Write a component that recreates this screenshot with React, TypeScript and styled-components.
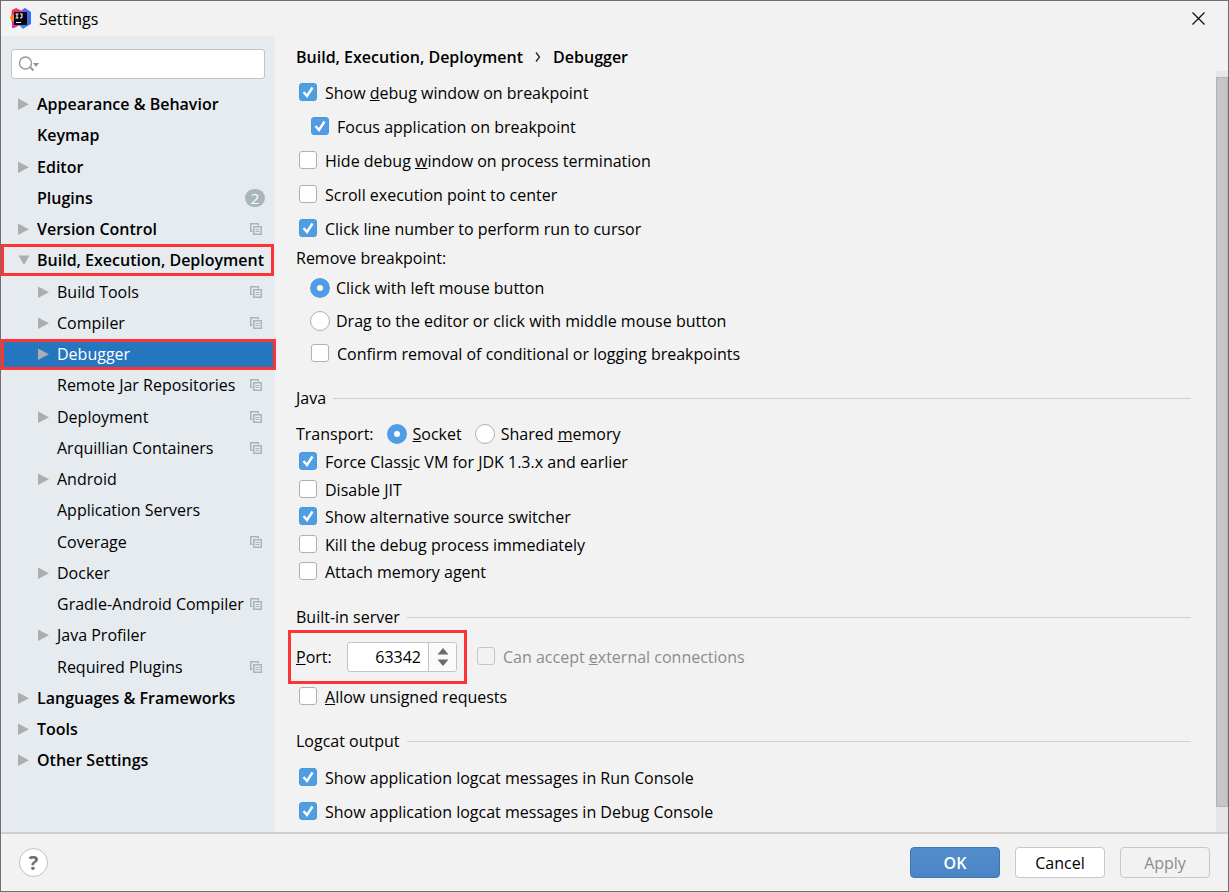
import React, { useId, useState } from "react";
import styled, { createGlobalStyle, css } from "styled-components";

const GlobalStyle = createGlobalStyle`
  *, *::before, *::after { box-sizing: border-box; }
  body { margin: 0; background: #f2f2f2; }
  body, button, input {
    font-family: "Open Sans", "Noto Sans", sans-serif;
    font-size: 16px;
    line-height: 24px;
    color: #000;
  }
  button, input { margin: 0; padding: 0; }
`;

const highlight = css`
  &::after {
    content: "";
    position: absolute;
    border: 3px solid #fb3536;
    pointer-events: none;
  }
`;

const Window = styled.div`
  display: flex;
  flex-direction: column;
  min-height: 100vh;
  border: 1px solid #6f6d70;
  background: #f2f2f2;
`;

const TitleBar = styled.header`
  display: flex;
  align-items: center;
  gap: 8px;
  height: 35px;
  padding: 0 23px 0 9px;
`;

const Title = styled.h1`
  flex: 1;
  margin: 0;
  font-size: 16px;
  font-weight: 400;
`;

const CloseButton = styled.button`
  display: flex;
  border: 0;
  background: none;
`;

const Body = styled.div`
  flex: 1;
  display: grid;
  grid-template-columns: 274px minmax(0, 1fr);
`;

const Sidebar = styled.aside`
  background: #e6ebf0;
  padding-top: 13px;
`;

const SearchBox = styled.div`
  display: flex;
  align-items: center;
  height: 30px;
  margin: 0 10px 10px;
  padding: 0 6px;
  background: #fff;
  border: 1px solid #c4c4c4;
  border-radius: 3px;
`;

const SearchInput = styled.input`
  flex: 1;
  min-width: 0;
  border: 0;
  outline: 0;
  background: none;
`;

const Tree = styled.ul`
  list-style: none;
  margin: 0;
  padding: 0;
`;

const TreeItem = styled.li<{ $child?: boolean; $selected?: boolean; $marked?: boolean }>`
  position: relative;
  display: flex;
  align-items: center;
  height: 31px;
  padding: 0 10px 0 ${(p) => (p.$child ? 36 : 16)}px;
  font-weight: ${(p) => (p.$child ? 400 : 600)};
  color: ${(p) => (p.$selected ? "#fff" : "#000")};
  background: ${(p) => (p.$selected ? "#2675bf" : "transparent")};
  white-space: nowrap;
  &:nth-child(4n + 2) { margin-bottom: 1px; }
  ${(p) => p.$marked && highlight}
  &::after { inset: ${(p) => (p.$child ? "0 -1px 0 0" : "-1px 1px 0 0")}; }
`;

const TreeLabel = styled.span`
  flex: 1;
  padding-bottom: 2px;
`;

const ArrowSlot = styled.span`
  display: flex;
  width: 20px;
`;

const Badge = styled.span`
  width: 20px;
  height: 18px;
  margin-bottom: 2px;
  border-radius: 9px;
  background: #a9b6be;
  color: #fff;
  font-size: 15px;
  font-weight: 400;
  line-height: 18px;
  text-align: center;
`;

const CopySlot = styled.span`
  display: flex;
  padding: 0 3px 1px 0;
`;

const Main = styled.main`
  display: grid;
  grid-template-columns: minmax(0, 1fr) 12px;
  grid-template-rows: 35px 1fr;
`;

const Breadcrumb = styled.h2`
  grid-column: 1 / -1;
  display: flex;
  align-items: center;
  gap: 12px;
  margin: 0;
  padding: 6px 0 0 21px;
  font-size: 16px;
  font-weight: 600;
`;

const Content = styled.form`
  padding: 10px 25px 6px 21px;
`;

const ScrollTrack = styled.div`
  display: flex;
  padding: 6px 0 25px;
  background: #e6e6e6;
`;

const ScrollThumb = styled.div`
  flex: 1;
  background: #c6c6c6;
  border: 1px solid #b4b4b4;
`;

const Options = styled.div<{ $gap: number }>`
  display: flex;
  flex-direction: column;
  gap: ${(p) => p.$gap}px;
  padding-left: 3px;
`;

const DenseOptions = styled(Options)`
  & > :nth-child(odd) { margin-bottom: 1px; }
`;

const GroupLabel = styled.div`
  margin: 5px 0 6px;
`;

const OptionLabel = styled.label<{ $indent?: boolean; $disabled?: boolean }>`
  display: flex;
  align-items: center;
  gap: 8px;
  height: 24px;
  padding-left: ${(p) => (p.$indent ? 12 : 0)}px;
  color: ${(p) => (p.$disabled ? "#8c8c8c" : "#000")};
  white-space: nowrap;
`;

const RadioLabel = styled(OptionLabel)`
  gap: 6px;
  padding-left: ${(p) => (p.$indent ? 11 : 0)}px;
`;

const CheckFrame = styled.span`
  display: grid;
  width: 18px;
  height: 18px;
  margin-bottom: 2px;
  & > * { grid-area: 1 / 1; }
  & > svg { pointer-events: none; }
`;

const CheckInput = styled.input`
  appearance: none;
  width: 18px;
  height: 18px;
  border: 1px solid #b0b0b0;
  border-radius: 3px;
  background: #fff;
  &:checked { background: #4f9ee3; border-color: #4b97d9; }
  &:disabled { background: #f2f2f2; border-color: #c4c4c4; }
`;

const RadioInput = styled.input`
  appearance: none;
  width: 20px;
  height: 20px;
  border: 1px solid #b0b0b0;
  border-radius: 50%;
  background: #fff;
  &:checked { border: 7px solid #4f9ee3; }
`;

const SectionTitle = styled.h3`
  display: flex;
  align-items: center;
  gap: 7px;
  margin: 0;
  font-size: 16px;
  font-weight: 400;
  &::after {
    content: "";
    flex: 1;
    height: 1px;
    background: #d0d0d0;
  }
`;

const Section = styled.section`
  padding-top: 20px;
`;

const Transport = styled.div`
  display: flex;
  align-items: center;
  gap: 13px;
  margin: 12px 0 4px;
`;

const PortRow = styled.div`
  display: flex;
  align-items: center;
  gap: 20px;
  margin: 13px 0;
`;

const PortField = styled.div`
  position: relative;
  display: flex;
  align-items: center;
  ${highlight}
  &::after { inset: -12px -10px -12px -8px; }
`;

const PortLabel = styled.label`
  width: 51px;
`;

const Spinner = styled.div`
  display: flex;
  width: 110px;
  height: 30px;
  border: 1px solid #c4c4c4;
  border-radius: 3px;
  background: #fff;
  overflow: hidden;
`;

const PortInput = styled.input`
  flex: 1;
  min-width: 0;
  padding-right: 7px;
  border: 0;
  outline: 0;
  background: none;
  text-align: right;
`;

const SpinButtons = styled.div`
  display: grid;
  grid-template-rows: 1fr 1fr;
  width: 28px;
  border-left: 1px solid #c4c4c4;
  background: #fafafa;
`;

const SpinButton = styled.button<{ $down?: boolean }>`
  display: flex;
  justify-content: center;
  align-items: ${(p) => (p.$down ? "flex-start" : "flex-end")};
  padding: 2px 0;
  border: 0;
  background: none;
`;

const Footer = styled.footer`
  display: flex;
  align-items: center;
  gap: 15px;
  height: 59px;
  padding: 0 18px;
  border-top: 2px solid #d0d0d0;
`;

const HelpButton = styled.button`
  display: flex;
  align-items: center;
  justify-content: center;
  width: 29px;
  height: 29px;
  margin-right: auto;
  border: 1px solid #c0c0c0;
  border-radius: 50%;
  background: #fff;
  color: #6e6e6e;
  font-size: 20px;
  font-weight: 700;
`;

const DialogButton = styled.button<{ $primary?: boolean }>`
  width: 90px;
  height: 31px;
  border: 1px solid ${(p) => (p.$primary ? "#3b78b8" : "#c8c8c8")};
  border-radius: 4px;
  background: ${(p) => (p.$primary ? "linear-gradient(#528ccb, #4a86c6)" : "#fff")};
  color: ${(p) => (p.$primary ? "#fff" : "#000")};
  font-weight: ${(p) => (p.$primary ? 600 : 400)};
  &:disabled { background: #f2f2f2; color: #8c8c8c; }
`;

const IdeaLogo = () => (
  <svg width="21" height="21" viewBox="0 0 21 21" aria-hidden="true">
    <path d="M2 2l4-2 6 3-3 7-6 6-2-6z" fill="#fc2d61" />
    <path d="M0 9l4-3 2 5-4 4z" fill="#fd8524" />
    <path d="M2 13l5 2 3 2-6 3H2z" fill="#d530a8" />
    <path d="M11 3l4-3 6 4v12l-7 4-5-4 7-7z" fill="#3f6df2" />
    <path d="M8 16l5 5 4-3-2-3z" fill="#2e8bf5" />
    <path d="M11 3l4-3 1 5h-5z" fill="#7a52e8" />
    <rect x="4" y="4" width="13" height="13" fill="#0b0710" />
    <path d="M5.500 6h3M7 6v4M5.500 10h3M10 6h2.500M12 6v3q0 1-2 1M6 14.500h5" stroke="#fff" strokeWidth="1.100" fill="none" />
  </svg>
);

const CloseIcon = () => (
  <svg width="13" height="13" viewBox="0 0 13 13" aria-hidden="true">
    <path d="M.5.5l12 12M12.500.5l-12 12" stroke="#111" strokeWidth="1.300" />
  </svg>
);

const SearchIcon = () => (
  <svg width="22" height="18" viewBox="0 0 22 18" aria-hidden="true">
    <circle cx="7.500" cy="8" r="6" fill="none" stroke="#919aa1" strokeWidth="1.400" />
    <path d="M12 12l3.500 3.500" stroke="#919aa1" strokeWidth="2" />
    <path d="M15 8h6l-3 4z" fill="#8b959c" />
  </svg>
);

const Arrow = ({ open }: { open?: boolean }) => (
  <svg width="13" height="13" viewBox="0 0 13 13" aria-hidden="true">
    <path d={open ? "M1.500 1.500h11L7 11z" : "M1 .5v11.500L12 6.250z"} fill="#adadad" />
  </svg>
);

const CopyIcon = () => (
  <svg width="12" height="12" viewBox="0 0 12 12" fill="none" stroke="#a9b5bc" aria-hidden="true">
    <path d="M2.500 8.250H.75V.75h7.500v1.750" strokeWidth="1.500" />
    <rect x="3.750" y="3.750" width="7.500" height="7.500" strokeWidth="1.500" />
    <path d="M5.500 6.500h4M5.500 8.500h4" />
  </svg>
);

interface CheckProps {
  children: React.ReactNode;
  checked?: boolean;
  indent?: boolean;
  disabled?: boolean;
}

const Check = ({ children, checked = false, indent, disabled }: CheckProps) => {
  const [on, setOn] = useState(checked);
  return (
    <OptionLabel $indent={indent} $disabled={disabled}>
      <CheckFrame>
        <CheckInput type="checkbox" checked={on} disabled={disabled} onChange={() => setOn(!on)} />
        {on && (
          <svg width="18" height="18" viewBox="0 0 18 18" aria-hidden="true">
            <path d="M4.500 9l3.500 4 5.500-8.500" fill="none" stroke="#fff" strokeWidth="2.400" />
          </svg>
        )}
      </CheckFrame>
      <span>{children}</span>
    </OptionLabel>
  );
};

interface RadioProps {
  children: React.ReactNode;
  name: string;
  checked?: boolean;
  indent?: boolean;
}

const Radio = ({ children, name, checked, indent }: RadioProps) => (
  <RadioLabel $indent={indent}>
    <RadioInput type="radio" name={name} defaultChecked={checked} />
    <span>{children}</span>
  </RadioLabel>
);

interface Entry {
  label: string;
  child?: boolean;
  arrow?: "closed" | "open";
  copy?: boolean;
  badge?: string;
  selected?: boolean;
  marked?: boolean;
}

const entries: Entry[] = [
  { label: "Appearance & Behavior", arrow: "closed" },
  { label: "Keymap" },
  { label: "Editor", arrow: "closed" },
  { label: "Plugins", badge: "2" },
  { label: "Version Control", arrow: "closed", copy: true },
  { label: "Build, Execution, Deployment", arrow: "open", marked: true },
  { label: "Build Tools", child: true, arrow: "closed", copy: true },
  { label: "Compiler", child: true, arrow: "closed", copy: true },
  { label: "Debugger", child: true, arrow: "closed", selected: true, marked: true },
  { label: "Remote Jar Repositories", child: true, copy: true },
  { label: "Deployment", child: true, arrow: "closed", copy: true },
  { label: "Arquillian Containers", child: true, copy: true },
  { label: "Android", child: true, arrow: "closed" },
  { label: "Application Servers", child: true },
  { label: "Coverage", child: true, copy: true },
  { label: "Docker", child: true, arrow: "closed" },
  { label: "Gradle-Android Compiler", child: true, copy: true },
  { label: "Java Profiler", child: true, arrow: "closed" },
  { label: "Required Plugins", child: true, copy: true },
  { label: "Languages & Frameworks", arrow: "closed" },
  { label: "Tools", arrow: "closed" },
  { label: "Other Settings", arrow: "closed" },
];

const LogcatOptions = styled(Options)`
  margin-top: 13px;
`;

export default function App() {
  const portId = useId();
  const [port, setPort] = useState(63342);

  return (
    <Window>
      <GlobalStyle />
      <TitleBar>
        <IdeaLogo />
        <Title>Settings</Title>
        <CloseButton type="button" aria-label="Close"><CloseIcon /></CloseButton>
      </TitleBar>

      <Body>
        <Sidebar>
          <SearchBox>
            <SearchIcon />
            <SearchInput type="text" aria-label="Search settings" />
          </SearchBox>
          <Tree>
            {entries.map((e) => (
              <TreeItem key={e.label} $child={e.child} $selected={e.selected} $marked={e.marked}>
                <ArrowSlot>{e.arrow && <Arrow open={e.arrow === "open"} />}</ArrowSlot>
                <TreeLabel>{e.label}</TreeLabel>
                {e.badge && <Badge>{e.badge}</Badge>}
                {e.copy && <CopySlot><CopyIcon /></CopySlot>}
              </TreeItem>
            ))}
          </Tree>
        </Sidebar>

        <Main>
          <Breadcrumb>
            <span>Build, Execution, Deployment</span>
            <svg width="6" height="10" viewBox="0 0 6 10" aria-hidden="true">
              <path d="M1 .5L4.500 5 1 9.500" fill="none" stroke="#222" strokeWidth="1.300" />
            </svg>
            <span>Debugger</span>
          </Breadcrumb>

          <Content onSubmit={(e) => e.preventDefault()}>
            <Options $gap={10}>
              <Check checked>Show <u>d</u>ebug window on breakpoint</Check>
              <Check checked indent>Focus application on breakpoint</Check>
              <Check>Hide debug <u>w</u>indow on process termination</Check>
              <Check>Scroll execution point to center</Check>
              <Check checked>Click line number to perform run to cursor</Check>
            </Options>
            <GroupLabel>Remove breakpoint:</GroupLabel>
            <Options $gap={9}>
              <Radio name="remove" checked indent>Click with left mouse button</Radio>
              <Radio name="remove" indent>Drag to the editor or click with middle mouse button</Radio>
              <Check indent>Confirm removal of conditional or logging breakpoints</Check>
            </Options>

            <Section>
              <SectionTitle>Java</SectionTitle>
              <Transport>
                <span>Transport:</span>
                <Radio name="transport" checked><u>S</u>ocket</Radio>
                <Radio name="transport">Shared <u>m</u>emory</Radio>
              </Transport>
              <DenseOptions $gap={3}>
                <Check checked>Force Class<u>i</u>c VM for JDK 1.3.x and earlier</Check>
                <Check>Disable JIT</Check>
                <Check checked>Show alternative source switcher</Check>
                <Check>Kill the debug process immediately</Check>
                <Check>Attach memory agent</Check>
              </DenseOptions>
            </Section>

            <Section>
              <SectionTitle>Built-in server</SectionTitle>
              <PortRow>
                <PortField>
                  <PortLabel htmlFor={portId}><u>P</u>ort:</PortLabel>
                  <Spinner>
                    <PortInput
                      id={portId}
                      type="text"
                      inputMode="numeric"
                      value={port}
                      onChange={(e) => setPort(Number(e.target.value) || 0)}
                    />
                    <SpinButtons>
                      <SpinButton type="button" aria-label="Increase port" onClick={() => setPort(port + 1)}>
                        <svg width="12" height="7" viewBox="0 0 12 7"><path d="M6 0l5.500 6.500H.5z" fill="#6b6b6b" /></svg>
                      </SpinButton>
                      <SpinButton $down type="button" aria-label="Decrease port" onClick={() => setPort(port - 1)}>
                        <svg width="12" height="7" viewBox="0 0 12 7"><path d="M6 7L.5.5h11z" fill="#6b6b6b" /></svg>
                      </SpinButton>
                    </SpinButtons>
                  </Spinner>
                </PortField>
                <Check disabled>Can accept <u>e</u>xternal connections</Check>
              </PortRow>
              <Options $gap={10}>
                <Check><u>A</u>llow unsigned requests</Check>
              </Options>
            </Section>

            <Section>
              <SectionTitle>Logcat output</SectionTitle>
              <LogcatOptions $gap={10}>
                <Check checked>Show application logcat messages in Run Console</Check>
                <Check checked>Show application logcat messages in Debug Console</Check>
              </LogcatOptions>
            </Section>
          </Content>

          <ScrollTrack><ScrollThumb /></ScrollTrack>
        </Main>
      </Body>

      <Footer>
        <HelpButton type="button" aria-label="Help">?</HelpButton>
        <DialogButton type="button" $primary>OK</DialogButton>
        <DialogButton type="button">Cancel</DialogButton>
        <DialogButton type="button" disabled>Apply</DialogButton>
      </Footer>
    </Window>
  );
}
